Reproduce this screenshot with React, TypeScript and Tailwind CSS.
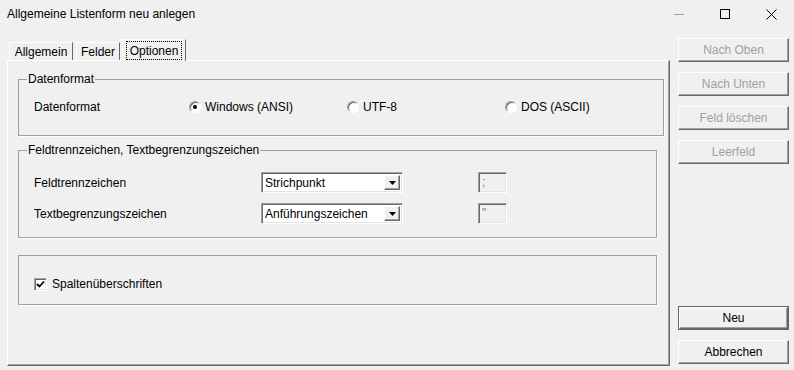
import React from "react";

const raised =
  "border border-t-white border-l-white border-b-[#696969] border-r-[#696969] shadow-[inset_-1px_-1px_0_#a0a0a0]";
const sunken =
  "border border-t-[#a0a0a0] border-l-[#a0a0a0] border-b-white border-r-white shadow-[inset_1px_1px_0_#696969,inset_-1px_-1px_0_#e3e3e3]";
const groupBorder = "border border-[#a0a0a0] shadow-[1px_1px_0_#ffffff]";

function Button({ label, disabled, isDefault }: { label: string; disabled?: boolean; isDefault?: boolean }) {
  const text = disabled ? "text-[#a0a0a0]" : "text-black";
  if (isDefault) {
    return (
      <div className="h-[24px] w-[111px] border border-[#646464]">
        <div className={`h-full w-full flex items-center justify-center ${raised} ${text}`}>{label}</div>
      </div>
    );
  }
  return (
    <div className={`h-[24px] w-[111px] flex items-center justify-center ${raised} ${text}`}>
      {label}
    </div>
  );
}

function Radio({ label, checked }: { label: string; checked?: boolean }) {
  return (
    <div className="w-[158px] flex items-center gap-[4px]">
      <div className="w-[12px] h-[12px] rounded-full border border-t-[#a0a0a0] border-l-[#a0a0a0] border-r-white border-b-white bg-white shadow-[inset_1px_1px_0_#696969] flex items-center justify-center">
        {checked && <div className="w-[4px] h-[4px] rounded-full bg-black" />}
      </div>
      <span>{label}</span>
    </div>
  );
}

function Combo({ value }: { value: string }) {
  return (
    <div className={`w-[142px] h-[21px] bg-white flex items-center p-[2px] ${sunken}`}>
      <span className="flex-1 pl-[1px] leading-[14px]">{value}</span>
      <div className={`w-[16px] h-full flex items-center justify-center bg-[#f0f0f0] ${raised}`}>
        <svg width="7" height="4" viewBox="0 0 7 4">
          <path d="M0 0 H7 L3.5 4 Z" fill="#000" />
        </svg>
      </div>
    </div>
  );
}

function SmallBox({ value }: { value: string }) {
  return (
    <div className={`w-[29px] h-[21px] bg-[#f0f0f0] text-[#808080] pl-[3px] leading-[19px] ml-[75px] ${sunken}`}>
      {value}
    </div>
  );
}

export default function App() {
  return (
    <div className="w-[794px] h-[370px] overflow-hidden bg-[#f0f0f0] text-[12px] leading-[14px] text-black font-['Liberation_Sans',Arial,sans-serif]">
      {/* title bar */}
      <div className="h-[28px] flex items-center">
        <span className="pl-[7px] flex-1">Allgemeine Listenform neu anlegen</span>
        <div className="w-[46px] h-full flex items-center justify-center">
          <div className="w-[10px] h-px bg-[#a0a0a0]" />
        </div>
        <div className="w-[46px] h-full flex items-center justify-center">
          <div className="w-[10px] h-[10px] border border-black" />
        </div>
        <div className="w-[46px] h-full flex items-center justify-center">
          <svg width="11" height="11" viewBox="0 0 11 11">
            <path d="M0.5 0.5 L10.5 10.5 M10.5 0.5 L0.5 10.5" stroke="#000" strokeWidth="1" />
          </svg>
        </div>
      </div>

      <div className="flex">
        {/* left: tabs + panel */}
        <div className="pl-[7px] pt-[11px]">
          <div className="flex items-end h-[21px] pl-[2px]">
            <div className="h-[18px] w-[64px] flex items-center justify-center border-t border-l border-r border-t-white border-l-white border-r-[#696969]">
              Allgemein
            </div>
            <div className="ml-[3px] h-[18px] w-[44px] flex items-center justify-center border-t border-l border-r border-t-white border-l-white border-r-[#696969]">
              Felder
            </div>
            <div className="relative z-10 ml-[2px] mb-[-1px] h-[22px] w-[64px] bg-[#f0f0f0] flex justify-center pt-px border-t border-l border-r border-t-white border-l-white border-r-[#696969]">
              <span className="h-[19px] px-[3px] border border-dotted border-black flex items-center">Optionen</span>
            </div>
          </div>

          <div className="w-[663px] h-[306px] border border-t-white border-l-white border-b-[#696969] border-r-[#696969] shadow-[inset_-1px_-1px_0_#a0a0a0] pl-[10px] pt-[11px]">
            <fieldset className={`w-[639px] pb-[21px] ${groupBorder}`}>
              <legend className="ml-[8px] px-[1px]">Datenformat</legend>
              <div className="mt-[14px] pl-[15px] h-[14px] flex items-center">
                <span className="w-[155px]">Datenformat</span>
                <Radio label="Windows (ANSI)" checked />
                <Radio label="UTF-8" />
                <Radio label="DOS (ASCII)" />
              </div>
            </fieldset>

            <fieldset className={`mt-[7px] w-[639px] pb-[13px] ${groupBorder}`}>
              <legend className="ml-[8px] px-[1px]">Feldtrennzeichen, Textbegrenzungszeichen</legend>
              <div className="mt-[15px] pl-[15px] flex flex-col gap-[10px]">
                <div className="h-[21px] flex items-center">
                  <span className="w-[227px]">Feldtrennzeichen</span>
                  <Combo value="Strichpunkt" />
                  <SmallBox value=";" />
                </div>
                <div className="h-[21px] flex items-center">
                  <span className="w-[227px]">Textbegrenzungszeichen</span>
                  <Combo value="Anführungszeichen" />
                  <SmallBox value={'"'} />
                </div>
              </div>
            </fieldset>

            <div className={`mt-[17px] w-[639px] h-[50px] pl-[15px] pt-[21px] ${groupBorder}`}>
              <div className="flex items-center gap-[5px]">
                <div className={`w-[13px] h-[13px] bg-white flex items-center justify-center ${sunken}`}>
                  <svg width="9" height="9" viewBox="0 0 9 9">
                    <path d="M1 4 L3.5 6.5 L8 1.5" stroke="#000" strokeWidth="1.8" fill="none" />
                  </svg>
                </div>
                <span>Spaltenüberschriften</span>
              </div>
            </div>
          </div>
        </div>

        {/* right: buttons */}
        <div className="ml-[8px] pt-[10px] pb-[6px] h-[342px] flex flex-col gap-[10px]">
          <Button label="Nach Oben" disabled />
          <Button label="Nach Unten" disabled />
          <Button label="Feld löschen" disabled />
          <Button label="Leerfeld" disabled />
          <div className="mt-auto flex flex-col gap-[10px]">
            <Button label="Neu" isDefault />
            <Button label="Abbrechen" />
          </div>
        </div>
      </div>
    </div>
  );
}
